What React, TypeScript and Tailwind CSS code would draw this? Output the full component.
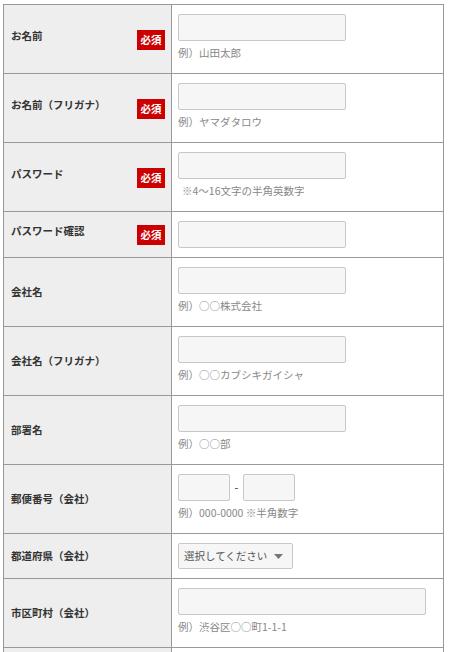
import React from 'react'

type Field = {
  label: string
  required?: boolean
  kind: 'text' | 'wide' | 'zip' | 'select'
  hint?: React.ReactNode
}

const fields: Field[] = [
  { label: 'お名前', required: true, kind: 'text', hint: '例）山田太郎' },
  { label: 'お名前（フリガナ）', required: true, kind: 'text', hint: '例）ヤマダタロウ' },
  { label: 'パスワード', required: true, kind: 'text', hint: <span className="pl-[4px]">※4～16文字の半角英数字</span> },
  { label: 'パスワード確認', required: true, kind: 'text' },
  { label: '会社名', kind: 'text', hint: '例）○○株式会社' },
  { label: '会社名（フリガナ）', kind: 'text', hint: '例）○○カブシキガイシャ' },
  { label: '部署名', kind: 'text', hint: '例）○○部' },
  { label: '郵便番号（会社）', kind: 'zip', hint: '例）000-0000 ※半角数字' },
  { label: '都道府県（会社）', kind: 'select' },
  { label: '市区町村（会社）', kind: 'wide', hint: '例）渋谷区○○町1-1-1' },
  { label: '', kind: 'wide' },
]

const inputBase = 'h-[27px] bg-[#f6f6f6] border border-[#c8c8c8] rounded-[2px] outline-none'

function Control({ kind }: { kind: Field['kind'] }) {
  if (kind === 'zip') {
    return (
      <div className="flex items-center">
        <input className={`${inputBase} w-[52px]`} />
        <span className="w-[13px] text-center text-[11px] text-[#333]">-</span>
        <input className={`${inputBase} w-[52px]`} />
      </div>
    )
  }
  if (kind === 'select') {
    return (
      <div className="flex items-center h-[26px] w-[115px] bg-[#f6f6f6] border border-[#c8c8c8] rounded-[2px] pl-[5px] text-[10.5px] text-[#555]">
        <span>選択してください</span>
        <svg width="9" height="5" viewBox="0 0 9 5" className="ml-[7px]">
          <path d="M0 0 L9 0 L4.5 5 Z" fill="#777" />
        </svg>
      </div>
    )
  }
  return <input className={`${inputBase} ${kind === 'wide' ? 'w-[248px]' : 'w-[168px]'}`} />
}

function Row({ field, first }: { field: Field; first: boolean }) {
  return (
    <div className={`flex ${first ? '' : 'border-t border-[#999]'}`}>
      <div className="w-[168px] shrink-0 bg-[#eeeeee] border-r border-[#999] flex items-center justify-between pl-[7px] pr-[6px]">
        <span className={`text-[10.5px] font-bold text-[#333] ${field.required ? 'pb-[7px]' : ''}`}>{field.label}</span>
        {field.required && (
          <span className="mt-[1px] w-[28px] h-[20px] bg-[#cc0000] text-white text-[10.5px] font-bold flex items-center justify-center">
            必須
          </span>
        )}
      </div>
      <div className={`flex-1 pl-[6px] pt-[9px] ${field.hint ? 'pb-[12px]' : 'pb-[9px]'}`}>
        <Control kind={field.kind} />
        {field.hint && (
          <div className="mt-[4px] leading-[16px] text-[10.5px] text-[#888]">{field.hint}</div>
        )}
      </div>
    </div>
  )
}

export default function App() {
  return (
    <main
      className="min-h-screen bg-white pt-[4px] pl-[3px]"
      style={{ fontFamily: '"Noto Sans CJK JP", "Noto Sans", sans-serif' }}
    >
      <div className="w-[441px] border border-[#999]">
        {fields.map((f, i) => (
          <Row key={i} field={f} first={i === 0} />
        ))}
      </div>
    </main>
  )
}
